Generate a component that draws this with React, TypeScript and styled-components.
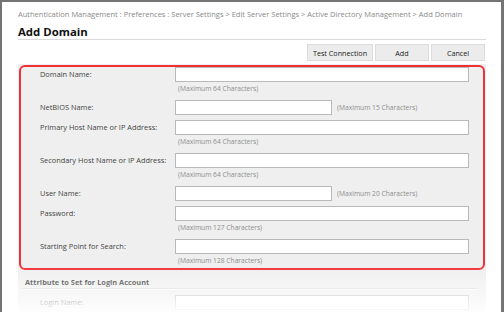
import React from "react";
import styled, { createGlobalStyle } from "styled-components";

const Global = createGlobalStyle`
  html, body { margin: 0; padding: 0; background: #fff; }
  * { box-sizing: border-box; }
`;

const Frame = styled.div`
  position: relative;
  width: 504px;
  height: 312px;
  overflow: hidden;
  background: #fff;
  border-top: 2px solid #747474;
  border-left: 2px solid #747474;
  border-right: 3px solid #747474;
  padding: 0 15px 0 16px;
  font-family: "Open Sans", "Liberation Sans", sans-serif;
`;

const Breadcrumb = styled.div`
  margin-top: 6px;
  font-size: 7.5px;
  line-height: 12px;
  color: #8a8a8a;
  white-space: nowrap;
`;

const Title = styled.h1`
  margin: 4px 0 0 0;
  font-size: 11.4px;
  line-height: 15px;
  font-weight: 700;
  color: #111;
  border-bottom: 1px solid #dadada;
`;

const ButtonBar = styled.div`
  display: flex;
  justify-content: flex-end;
  gap: 2px;
  margin-top: 4px;
  padding-right: 1px;
`;

const Button = styled.button<{ $w: number }>`
  width: ${(p) => p.$w}px;
  height: 17px;
  padding: 0;
  border: 1px solid #dcdcdc;
  background: #ececec;
  font-family: inherit;
  font-size: 7.2px;
  color: #222;
`;

const Panel = styled.div`
  margin-top: 3px;
  background: #efefef;
  padding-top: 1px;
  height: 260px;
`;

const Highlight = styled.div`
  margin: 0 1px;
  border: 2px solid #ef3036;
  border-radius: 6px;
  padding: 0 0 1px 19px;
  display: flex;
  flex-direction: column;
  gap: 5px;
`;

const Row = styled.div`
  display: flex;
  align-items: flex-start;
`;

const Label = styled.div`
  width: 135px;
  flex: none;
  height: 15px;
  line-height: 15px;
  font-size: 7.4px;
  color: #444;
  white-space: nowrap;
`;

const Field = styled.div<{ $inline?: boolean }>`
  display: flex;
  flex-direction: ${(p) => (p.$inline ? "row" : "column")};
  align-items: ${(p) => (p.$inline ? "center" : "flex-start")};
  gap: ${(p) => (p.$inline ? "5px" : "0")};
`;

const Input = styled.div<{ $w: number }>`
  width: ${(p) => p.$w}px;
  height: 15px;
  background: #fff;
  border: 1px solid #b9b9b9;
`;

const Hint = styled.div<{ $inline?: boolean }>`
  font-size: 6.7px;
  line-height: 12px;
  color: #8e8e8e;
  padding-left: ${(p) => (p.$inline ? "0" : "3px")};
  padding-top: ${(p) => (p.$inline ? "0" : "1px")};
  white-space: nowrap;
`;

const Section = styled.div`
  padding: 0 8px 0 4px;
`;

const SectionTitle = styled.div`
  margin-top: 6px;
  padding-left: 3px;
  font-size: 7.4px;
  line-height: 12px;
  font-weight: 700;
  color: #333;
  border-bottom: 1px solid #dcdcdc;
  box-shadow: 0 1px 0 #fafafa;
`;

const SectionRow = styled(Row)`
  margin-top: 6px;
  padding-left: 18px;
`;

const Fade = styled.div`
  position: absolute;
  left: -2px;
  right: -3px;
  bottom: 0;
  height: 46px;
  background: linear-gradient(
    to bottom,
    rgba(255, 255, 255, 0) 0%,
    rgba(255, 255, 255, 0.35) 40%,
    rgba(255, 255, 255, 0.92) 100%
  );
  pointer-events: none;
`;

type FieldDef = {
  label: string;
  wide: boolean;
  hint: string;
};

const fields: FieldDef[] = [
  { label: "Domain Name:", wide: true, hint: "(Maximum 64 Characters)" },
  { label: "NetBIOS Name:", wide: false, hint: "(Maximum 15 Characters)" },
  { label: "Primary Host Name or IP Address:", wide: true, hint: "(Maximum 64 Characters)" },
  { label: "Secondary Host Name or IP Address:", wide: true, hint: "(Maximum 64 Characters)" },
  { label: "User Name:", wide: false, hint: "(Maximum 20 Characters)" },
  { label: "Password:", wide: true, hint: "(Maximum 127 Characters)" },
  { label: "Starting Point for Search:", wide: true, hint: "(Maximum 128 Characters)" },
];

export default function App() {
  return (
    <>
      <Global />
      <Frame>
        <Breadcrumb>
          Authentication Management : Preferences : Server Settings &gt; Edit Server Settings &gt; Active Directory
          Management &gt; Add Domain
        </Breadcrumb>
        <Title>Add Domain</Title>
        <ButtonBar>
          <Button $w={66}>Test Connection</Button>
          <Button $w={54}>Add</Button>
          <Button $w={54}>Cancel</Button>
        </ButtonBar>
        <Panel>
          <Highlight>
            {fields.map((f) => (
              <Row key={f.label}>
                <Label>{f.label}</Label>
                <Field $inline={!f.wide}>
                  <Input $w={f.wide ? 294 : 157} />
                  <Hint $inline={!f.wide}>{f.hint}</Hint>
                </Field>
              </Row>
            ))}
          </Highlight>
          <Section>
            <SectionTitle>Attribute to Set for Login Account</SectionTitle>
            <SectionRow>
              <Label>Login Name:</Label>
              <Input $w={294} />
            </SectionRow>
          </Section>
        </Panel>
        <Fade />
      </Frame>
    </>
  );
}
